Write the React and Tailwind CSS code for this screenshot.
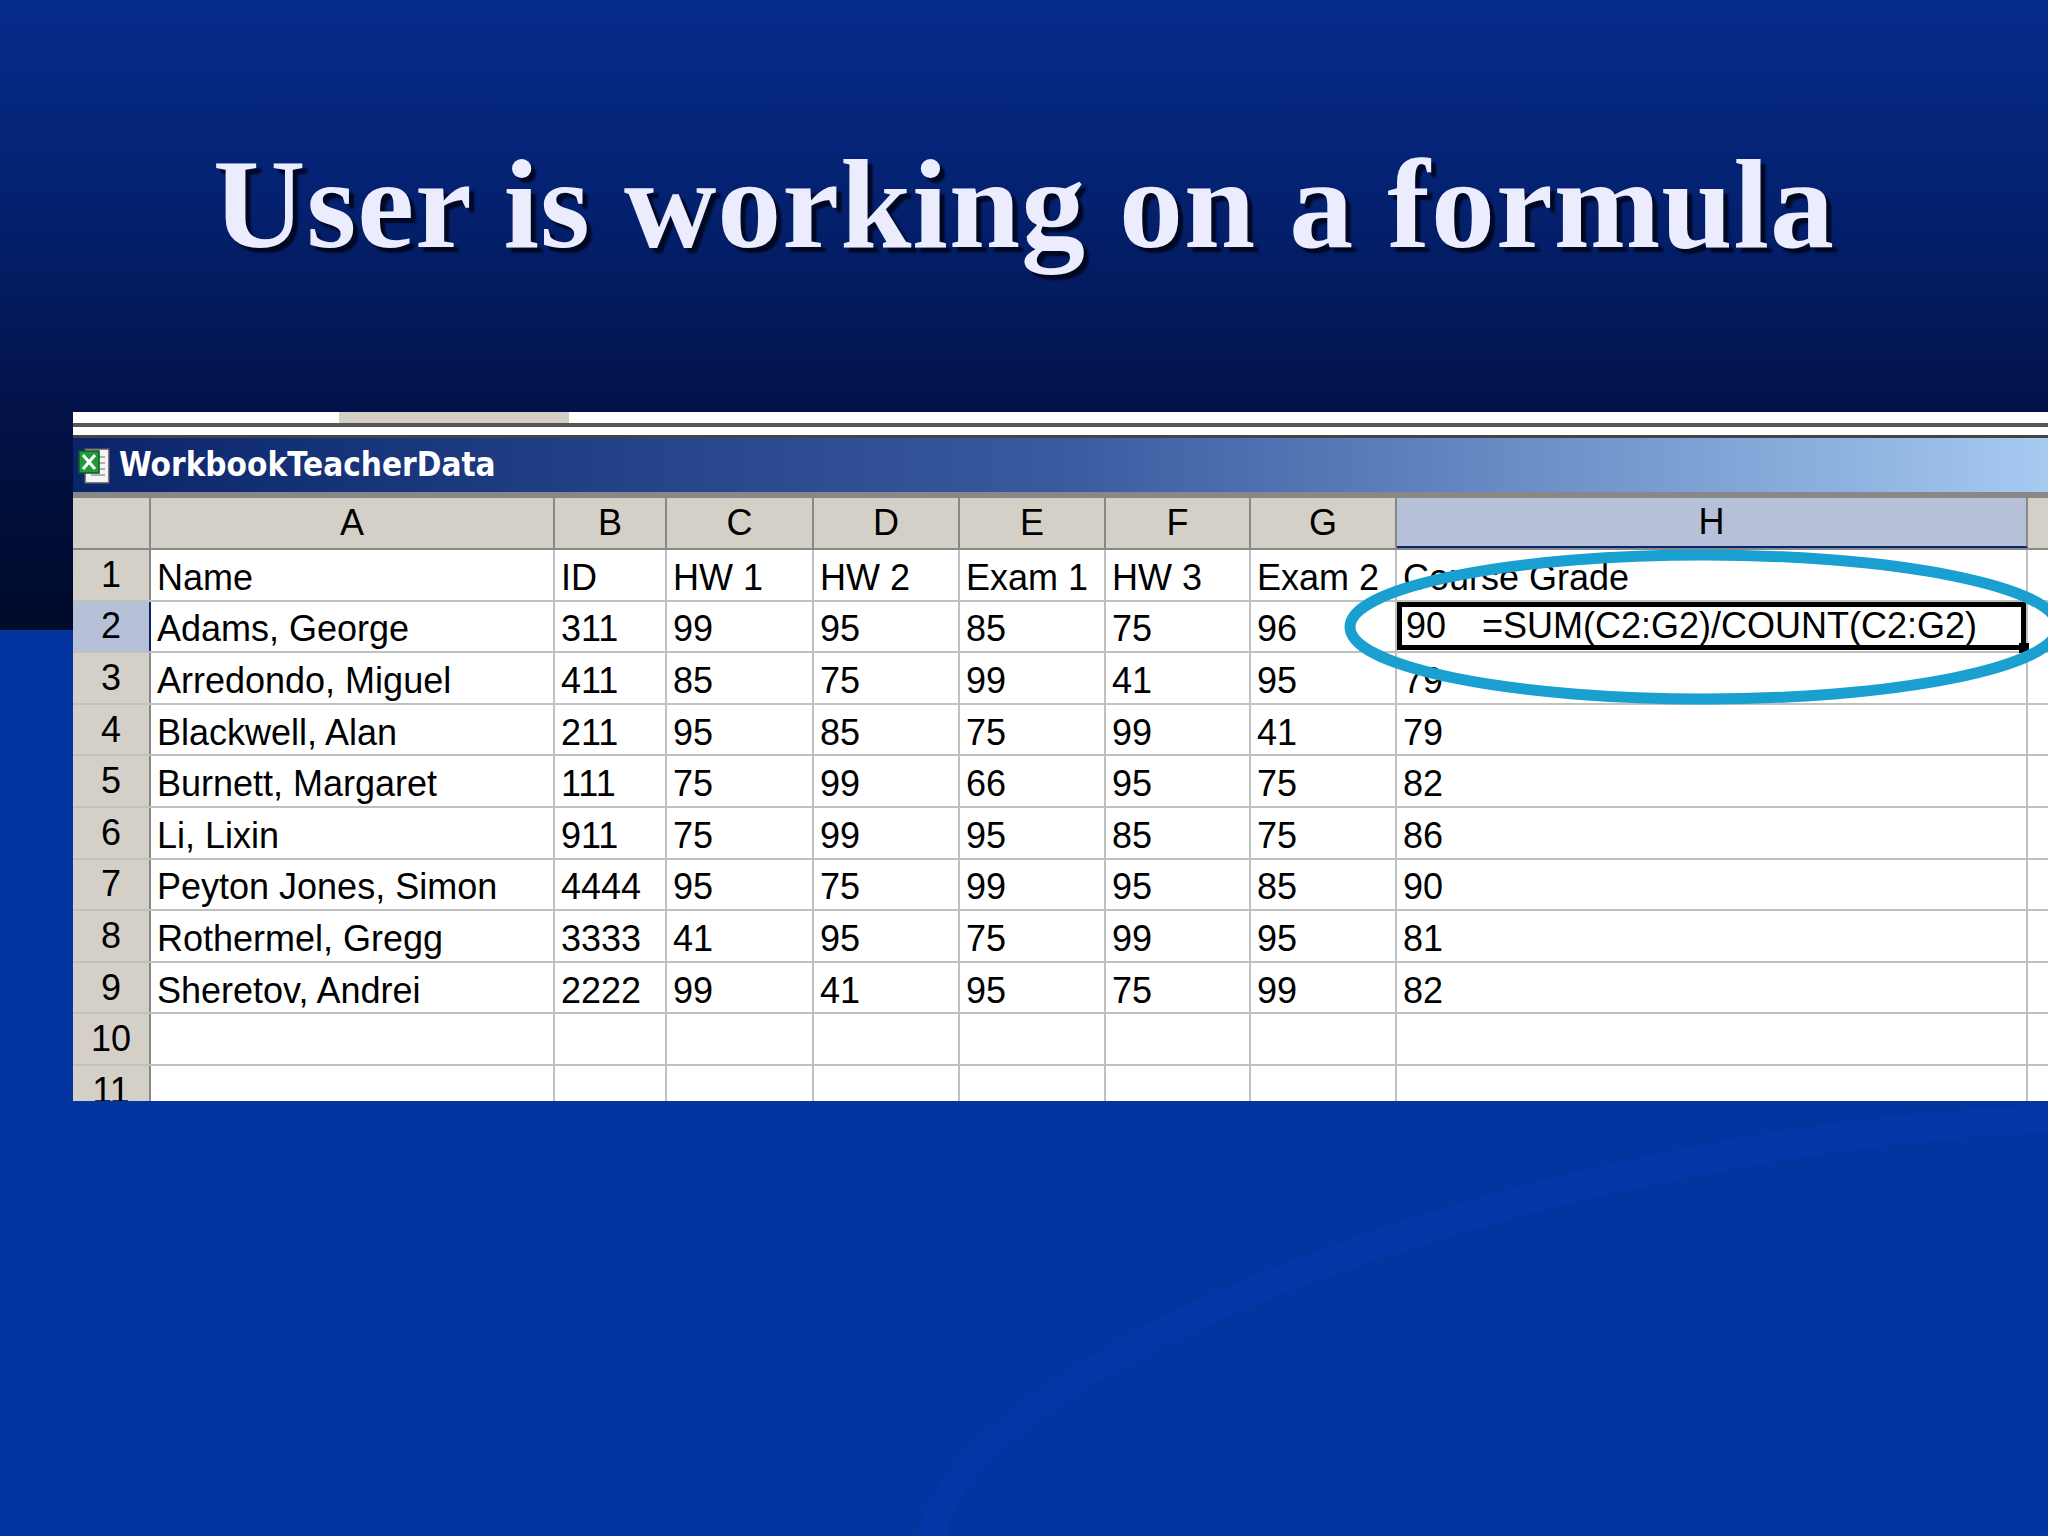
import React from 'react';

const cols = [
  { key: 'A', w: 'w-[404px]' },
  { key: 'B', w: 'w-[112px]' },
  { key: 'C', w: 'w-[147px]' },
  { key: 'D', w: 'w-[146px]' },
  { key: 'E', w: 'w-[146px]' },
  { key: 'F', w: 'w-[145px]' },
  { key: 'G', w: 'w-[146px]' },
  { key: 'H', w: 'w-[631px]' },
];

const rows = [
  ['Name', 'ID', 'HW 1', 'HW 2', 'Exam 1', 'HW 3', 'Exam 2', 'Course Grade'],
  ['Adams, George', '311', '99', '95', '85', '75', '96', ''],
  ['Arredondo, Miguel', '411', '85', '75', '99', '41', '95', '79'],
  ['Blackwell, Alan', '211', '95', '85', '75', '99', '41', '79'],
  ['Burnett, Margaret', '111', '75', '99', '66', '95', '75', '82'],
  ['Li, Lixin', '911', '75', '99', '95', '85', '75', '86'],
  ['Peyton Jones, Simon', '4444', '95', '75', '99', '95', '85', '90'],
  ['Rothermel, Gregg', '3333', '41', '95', '75', '99', '95', '81'],
  ['Sheretov, Andrei', '2222', '99', '41', '95', '75', '99', '82'],
  ['', '', '', '', '', '', '', ''],
  ['', '', '', '', '', '', '', ''],
];

const ExcelIcon = () => (
  <svg width="34" height="40" viewBox="0 0 34 40">
    <rect x="8" y="4" width="24" height="34" fill="#f4f4f4" stroke="#555" strokeWidth="1.5" />
    <path d="M14 12h14M14 18h14M14 24h14M14 30h14" stroke="#999" strokeWidth="1.5" />
    <rect x="2" y="6" width="20" height="22" fill="#1f9a3a" stroke="#0b5a1c" strokeWidth="1.5" />
    <path d="M6 10l12 14M18 10L6 24" stroke="#fff" strokeWidth="3" />
  </svg>
);

export default function App() {
  return (
    <div className="relative w-[2048px] h-[1536px] overflow-hidden bg-[#0334a0]">
      {/* top dark band */}
      <div className="h-[412px] bg-gradient-to-b from-[#072b8c] via-[#04216f] to-[#021248] flex items-start justify-center pt-[140px]">
        <h1
          className="text-[#ececff] text-[128px] leading-none font-bold tracking-[1px] [text-shadow:5px_5px_2px_#000822]"
          style={{ fontFamily: '"Liberation Serif", "Times New Roman", serif' }}
        >
          User is working on a formula
        </h1>
      </div>
      <div className="absolute left-0 top-[412px] w-[73px] h-[218px] bg-gradient-to-b from-[#021248] to-[#000a2a]" />
      <div className="absolute left-[900px] top-[1150px] w-[1600px] h-[500px] rounded-[50%] border-[30px] border-[#0638aa] opacity-70 -rotate-12" />

      {/* spreadsheet window */}
      <div
        className="relative ml-[73px] h-[689px] overflow-hidden bg-white"
        style={{ fontFamily: '"Liberation Sans", Arial, sans-serif' }}
      >
        <div className="h-[11px] flex">
          <div className="w-[266px] bg-white" />
          <div className="w-[230px] bg-[#d4d0c8]" />
          <div className="flex-1 bg-white" />
        </div>
        <div className="h-[4px] bg-[#555]" />
        <div className="h-[8px] bg-white" />
        <div className="h-[57px] flex items-center gap-2 pl-1 bg-gradient-to-r from-[#0a246a] via-[#3a5aa0] to-[#a6caf0] border-t-[3px] border-[#444]">
          <ExcelIcon />
          <span className="text-white font-bold text-[33px]" style={{ fontFamily: '"DejaVu Sans Condensed", "DejaVu Sans", sans-serif' }}>
            WorkbookTeacherData
          </span>
        </div>
        <div className="h-[6px] bg-[#888]" />
        {/* header row */}
        <div className="flex h-[52px] bg-[#d4d0c8] border-b-2 border-[#888] text-[36px] text-black">
          <div className="w-[78px] border-r-2 border-[#888]" />
          {cols.map((c) => (
            <div
              key={c.key}
              className={`${c.w} shrink-0 flex items-center justify-center border-r-2 border-[#888] ${c.key === 'H' ? 'bg-[#b6c0d8] border-b-2 border-b-[#0a246a]' : ''}`}
            >
              {c.key}
            </div>
          ))}
          <div className="flex-1" />
        </div>
        {rows.map((r, i) => (
          <div key={i} className="flex h-[51.6px] border-b-2 border-[#c0c0c0] text-[36px] text-black">
            <div
              className={`w-[78px] shrink-0 flex items-center justify-center border-r-2 ${i === 1 ? 'bg-[#b6c0d8] border-[#0a246a]' : 'bg-[#d4d0c8] border-[#888]'}`}
            >
              {i + 1}
            </div>
            {cols.map((c, j) => (
              <div key={c.key} className={`${c.w} shrink-0 flex items-center pl-[6px] pt-[6px] border-r-2 border-[#c0c0c0] whitespace-nowrap overflow-visible`}>
                {i === 1 && c.key === 'H' ? (
                  <div className="-ml-[6px] -mt-[6px] w-[calc(100%+6px)] h-[48px] border-[5px] border-black flex items-center pl-1 relative">
                    <span>90</span>
                    <span className="ml-[36px]">=SUM(C2:G2)/COUNT(C2:G2)</span>
                    <div className="absolute -right-[8px] -bottom-[8px] w-[10px] h-[10px] bg-black" />
                  </div>
                ) : (
                  r[j]
                )}
              </div>
            ))}
            <div className="flex-1" />
          </div>
        ))}
      </div>

      {/* highlight ellipse */}
      <svg className="absolute left-0 top-0 pointer-events-none" width="2048" height="1536">
        <ellipse cx="1704" cy="627" rx="354" ry="72" fill="none" stroke="#1aa0d0" strokeWidth="11" />
      </svg>
    </div>
  );
}
